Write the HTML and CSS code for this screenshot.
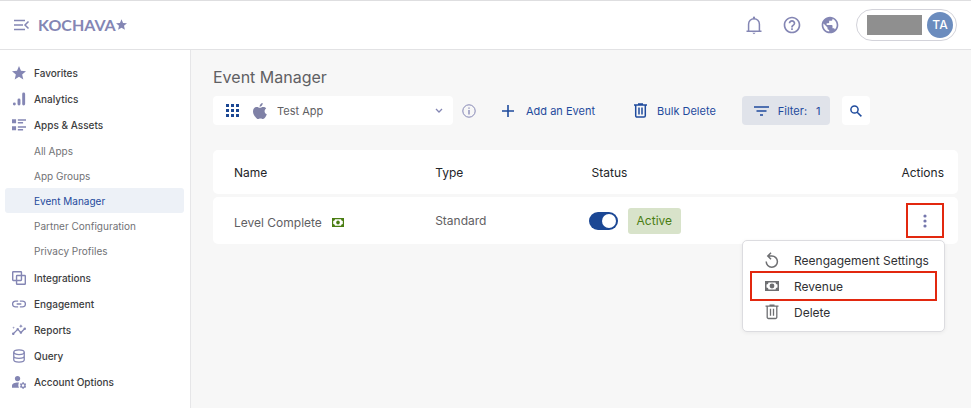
FILE: index.html
```html
<!DOCTYPE html>
<html lang="en">
<head>
  <meta charset="UTF-8" />
  <meta name="viewport" content="width=device-width, initial-scale=1.0"/>
  <title>Event Manager</title>
  <link rel="stylesheet" href="styles.css">
</head>
<body>
  <header class="topbar">
    <button class="icon-btn collapse" aria-label="Collapse menu">
      <svg width="16" height="12" viewBox="0 0 16 12" fill="none" stroke="currentColor" stroke-width="1.5"><path d="M0 1.500h11M0 6h9M0 10.500h11M14.500 2.500L11 6l3.500 3.500"/></svg>
    </button>
    <a class="logo" href="#">KOCHAVA<svg width="11" height="11" viewBox="2 2 20 19" fill="currentColor"><path d="M12 17.270L18.180 21l-1.640-7.030L22 9.240l-7.190-.61L12 2 9.190 8.630 2 9.240l5.460 4.730L5.820 21z"/></svg></a>
    <div class="top-actions">
      <button class="icon-btn" aria-label="Notifications">
        <svg width="20" height="20" viewBox="0 0 24 24" fill="none" stroke="currentColor" stroke-width="1.800"><path d="M3 19.500h18M5.500 19.500V11a6.500 6.500 0 0 1 13 0v8.500"/><path d="M12 2v3" stroke-width="2.500"/><path d="M10 21.200h4l-2 2z" fill="currentColor" stroke="none"/></svg>
      </button>
      <button class="icon-btn" aria-label="Help">
        <svg width="20" height="20" viewBox="0 0 24 24" fill="currentColor"><path d="M11 18h2v-2h-2v2zm1-16C6.480 2 2 6.480 2 12s4.480 10 10 10 10-4.480 10-10S17.520 2 12 2zm0 18c-4.410 0-8-3.590-8-8s3.590-8 8-8 8 3.590 8 8-3.590 8-8 8zm0-14c-2.210 0-4 1.790-4 4h2c0-1.100.9-2 2-2s2 .9 2 2c0 2-3 1.750-3 5h2c0-2.250 3-2.500 3-5 0-2.210-1.790-4-4-4z"/></svg>
      </button>
      <button class="icon-btn" aria-label="Language">
        <svg width="20" height="20" viewBox="0 0 24 24" fill="currentColor"><path d="M12 2C6.480 2 2 6.480 2 12s4.480 10 10 10 10-4.480 10-10S17.520 2 12 2zm-1 17.930c-3.950-.49-7-3.850-7-7.930 0-.62.080-1.210.21-1.790L9 15v1c0 1.100.9 2 2 2v1.930zm6.900-2.540c-.26-.81-1-1.390-1.900-1.390h-1v-3c0-.55-.45-1-1-1H8v-2h2c.55 0 1-.45 1-1V7h2c1.100 0 2-.9 2-2v-.41c2.930 1.190 5 4.060 5 7.410 0 2.080-.8 3.970-2.100 5.390z"/></svg>
      </button>
      <button class="account" aria-label="Account">
        <span class="account-name"></span>
        <span class="avatar">TA</span>
      </button>
    </div>
  </header>

  <div class="layout">
    <nav class="sidebar">
      <a class="nav-item" href="#"><svg viewBox="0 0 24 24" fill="currentColor"><path d="M12 18.300L19.400 23l-2-8.400L24 9l-8.600-.7L12 0 8.600 8.300 0 9l6.600 5.600L4.600 23z"/></svg>Favorites</a>
      <a class="nav-item" href="#"><svg viewBox="0 0 24 24" fill="currentColor"><circle cx="4" cy="20.500" r="2.500"/><rect x="9.500" y="11" width="5" height="12" rx="2.500"/><rect x="17.500" y="1" width="5" height="22" rx="2.500"/></svg>Analytics</a>
      <a class="nav-item" href="#"><svg viewBox="0 0 24 24" fill="currentColor"><path d="M0 2h7v7H0zM0 14h7v7H0zM10 2h14v2.500H10zM10 7h9v2.500h-9zM10 14h14v2.500H10zM10 19h9v2.500h-9z"/></svg>Apps &amp; Assets</a>
      <a class="nav-sub" href="#">All Apps</a>
      <a class="nav-sub" href="#">App Groups</a>
      <a class="nav-sub active" href="#">Event Manager</a>
      <a class="nav-sub" href="#">Partner Configuration</a>
      <a class="nav-sub" href="#">Privacy Profiles</a>
      <a class="nav-item" href="#"><svg viewBox="0 0 24 24" fill="none" stroke="currentColor" stroke-width="2.400"><rect x="1.200" y="1.200" width="15" height="15" rx="1"/><rect x="7.800" y="7.800" width="15" height="15" rx="1"/></svg>Integrations</a>
      <a class="nav-item" href="#"><svg viewBox="0 0 24 24" fill="none" stroke="currentColor" stroke-width="2.200"><path d="M10.500 7H6a5 5 0 0 0 0 10h4.500M13.500 7H18a5 5 0 0 1 0 10h-4.500M8 12h8"/></svg>Engagement</a>
      <a class="nav-item" href="#"><svg viewBox="1 1 22 22" fill="currentColor"><path d="M21 8c-1.450 0-2.260 1.440-1.930 2.510l-3.550 3.560c-.3-.09-.74-.09-1.040 0l-2.550-2.550C12.270 10.450 11.460 9 10 9c-1.450 0-2.270 1.440-1.930 2.520l-4.560 4.550C2.440 15.740 1 16.550 1 18c0 1.100.9 2 2 2 1.450 0 2.260-1.440 1.930-2.510l4.550-4.560c.3.090.74.090 1.040 0l2.550 2.550C12.730 16.550 13.540 18 15 18c1.450 0 2.270-1.440 1.930-2.520l3.560-3.550C21.560 12.260 23 11.450 23 10c0-1.100-.9-2-2-2zM15 9l.94-2.070L18 6l-2.060-.93L15 3l-.92 2.070L12 6l2.080.93zM3.500 11L4 9l2-.5L4 8l-.5-2L3 8l-2 .5L3 9z"/></svg>Reports</a>
      <a class="nav-item" href="#"><svg viewBox="0 0 24 24" fill="none" stroke="currentColor" stroke-width="2.200"><ellipse cx="12" cy="5.500" rx="9" ry="4"/><path d="M3 5.500v13c0 2.200 4 4 9 4s9-1.800 9-4v-13M3 12c0 2.200 4 4 9 4s9-1.800 9-4"/></svg>Query</a>
      <a class="nav-item" href="#"><svg viewBox="0 0 24 24" fill="currentColor"><circle cx="9.500" cy="6" r="4.500"/><path d="M12 13c-6-.5-12 1.500-12 5.500V22h12c-1.500-3-1.500-6 0-9z"/><circle cx="19" cy="18" r="3.300" fill="none" stroke="currentColor" stroke-width="2.200"/><path d="M18 12h2v3h-2zM18 21h2v3h-2zM13.300 15.900l1-1.700 2.600 1.500-1 1.700zM21.100 20.300l1-1.700 2.600 1.500-1 1.700zM13.300 20.100l2.600-1.500 1 1.700-2.600 1.500zM21.100 15.700l2.600-1.500 1 1.700-2.600 1.500z"/></svg>Account Options</a>
    </nav>

    <main class="content">
      <h1>Event Manager</h1>

      <div class="toolbar">
        <div class="app-picker">
          <svg class="grid-icon" width="13" height="13" viewBox="0 0 13 13" fill="currentColor"><path d="M0 0h3v3H0zM5 0h3v3H5zM10 0h3v3h-3zM0 5h3v3H0zM5 5h3v3H5zM10 5h3v3h-3zM0 10h3v3H0zM5 10h3v3H5zM10 10h3v3h-3z"/></svg>
          <svg class="apple-icon" width="14" height="16" viewBox="0 0 14 16" fill="currentColor"><path d="M9.700 0c.1 1.200-.4 2.100-1 2.800-.6.700-1.300 1-2.100 1-.1-1 .3-1.900.9-2.600C8.100.5 8.900.1 9.700 0zM13.200 5.400c-1 .6-1.600 1.500-1.600 2.800 0 1.500.9 2.600 2.200 3.100-.4 1.200-1 2.300-1.700 3.200-.6.800-1.200 1.400-2.100 1.400-.9 0-1.300-.5-2.500-.5s-1.600.5-2.500.5c-.9 0-1.600-.7-2.200-1.500C1.300 12.700 0 10.800 0 8.400 0 5.600 1.800 4 3.800 4c1.200 0 2.200.8 3.100.8.800 0 1.900-.8 3.300-.8 1.200 0 2.300.5 3 1.400z"/></svg>
          <select aria-label="App">
            <option>Test App</option>
          </select>
          <svg class="chevron" width="8" height="6" viewBox="0 0 8 6" fill="none" stroke="currentColor" stroke-width="1.300"><path d="M1 1l3 3 3-3"/></svg>
        </div>
        <button class="icon-btn info" aria-label="App information">
          <svg width="14" height="14" viewBox="0 0 14 14" fill="none" stroke="currentColor"><circle cx="7" cy="7" r="6.200"/><path d="M7 6v4.500M7 3.500v1.300" stroke-width="1.300"/></svg>
        </button>
        <button class="tool-btn add">
          <svg width="12" height="12" viewBox="0 0 12 12" stroke="currentColor" stroke-width="1.600"><path d="M6 0v12M0 6h12"/></svg>
          Add an Event
        </button>
        <button class="tool-btn bulk">
          <svg width="13" height="15" viewBox="0 0 13 15" fill="none" stroke="currentColor" stroke-width="1.500"><path d="M0 2h13M4 1h5M1.700 2v10.800a1.300 1.300 0 0 0 1.300 1.300h7a1.300 1.300 0 0 0 1.300-1.300V2M5 4.500v7M8 4.500v7"/></svg>
          Bulk Delete
        </button>
        <button class="tool-btn filter">
          <svg width="15" height="10" viewBox="0 0 15 10" stroke="currentColor" stroke-width="1.600"><path d="M0 1h15M2.500 5h10M6 9h3"/></svg>
          Filter: <span>1</span>
        </button>
        <button class="tool-btn search" aria-label="Search">
          <svg width="12" height="12" viewBox="0 0 12 12" fill="none" stroke="currentColor" stroke-width="1.500"><circle cx="4.500" cy="4.500" r="3.600"/><path d="M7.200 7.200l4.200 4.200"/></svg>
        </button>
      </div>

      <table class="events">
        <thead>
          <tr>
            <th class="col-name">Name</th>
            <th class="col-type">Type</th>
            <th class="col-status">Status</th>
            <th class="col-actions">Actions</th>
          </tr>
        </thead>
        <tbody>
          <tr>
            <td>
              <div class="event-name">
                Level Complete
                <svg width="12" height="9" viewBox="0 0 12 9"><path fill="currentColor" fill-rule="evenodd" d="M0 0h12v9H0zM3 1.300A1.800 1.800 0 0 1 1.200 3v3A1.800 1.800 0 0 1 3 7.700h6A1.800 1.800 0 0 1 10.800 6V3A1.800 1.800 0 0 1 9 1.300z"/><ellipse cx="6" cy="4.500" rx="1.800" ry="2" fill="currentColor"/></svg>
              </div>
            </td>
            <td>Standard</td>
            <td>
              <div class="status">
                <input type="checkbox" class="toggle" aria-label="Active" checked>
                <span class="badge">Active</span>
              </div>
            </td>
            <td>
              <div class="actions">
                <button class="more" aria-label="Row actions">
                  <svg width="4" height="14" viewBox="0 0 4 14" fill="currentColor"><circle cx="2" cy="2" r="1.600"/><circle cx="2" cy="7" r="1.600"/><circle cx="2" cy="12" r="1.600"/></svg>
                </button>
                <div class="menu">
                  <button class="menu-item">
                    <svg viewBox="0 0 14 16" fill="none" stroke="currentColor" stroke-width="1.500"><path d="M1.200 9.500A5.600 5.600 0 1 0 6.800 4H3.500M6 .8L2.800 4 6 7.200"/></svg>
                    Reengagement Settings
                  </button>
                  <button class="menu-item highlighted">
                    <svg viewBox="0 0 14 16"><path fill="currentColor" fill-rule="evenodd" d="M0 3h14v10H0zM3.500 4.400A2 2 0 0 1 1.500 6.400v3.200a2 2 0 0 1 2 2h7a2 2 0 0 1 2-2V6.400a2 2 0 0 1-2-2z"/><circle cx="7" cy="8" r="2.400" fill="currentColor"/></svg>
                    Revenue
                  </button>
                  <button class="menu-item">
                    <svg viewBox="0 0 14 16" fill="none" stroke="currentColor" stroke-width="1.300"><path d="M.5 2.200h13M4.500 1.200h5M2.200 2.200v11a1.300 1.300 0 0 0 1.300 1.300h7a1.300 1.300 0 0 0 1.300-1.300v-11M5.500 4.700v7M8.500 4.700v7"/></svg>
                    Delete
                  </button>
                </div>
              </div>
            </td>
          </tr>
        </tbody>
      </table>
    </main>
  </div>
</body>
</html>
```
FILE: styles.css
```css
* {
  box-sizing: border-box;
}
body {
  margin: 0;
  min-height: 100vh;
  display: flex;
  flex-direction: column;
  font-family: Inter, "Liberation Sans", sans-serif;
  font-size: 12px;
  color: #5f6063;
  background-color: #f7f7f7;
}
button,
select {
  font: inherit;
  border: none;
  background: none;
  cursor: pointer;
}
svg {
  flex-shrink: 0;
}

/* top bar */
.topbar {
  display: flex;
  align-items: center;
  height: 50px;
  padding: 0 14px 1px;
  background-color: white;
  border-top: 1px solid #dedee0;
  border-bottom: 1px solid #e2e2e4;
}
.icon-btn {
  display: flex;
  padding: 0;
  color: #8486b4;
}
.logo {
  display: flex;
  align-items: center;
  margin-left: 8px;
  font-family: Lato, sans-serif;
  font-size: 16px;
  font-weight: 700;
  color: #8486b4;
  text-decoration: none;
}
.top-actions {
  display: flex;
  align-items: center;
  gap: 18px;
  margin-left: auto;
}
.account {
  display: flex;
  align-items: center;
  gap: 5px;
  height: 32px;
  margin-left: -2px;
  padding: 0 3px 0 10px;
  border: 1px solid #d3d3da;
  border-radius: 16px;
  background-color: white;
}
.account-name {
  width: 55px;
  height: 20px;
  background-color: #8f8f8f;
}
.avatar {
  width: 26px;
  height: 26px;
  border-radius: 50%;
  background-color: #6b8cbe;
  color: white;
  font-size: 12px;
  font-weight: 500;
  line-height: 26px;
  text-align: center;
}

/* sidebar */
.layout {
  display: flex;
  flex: 1;
}
.sidebar {
  width: 191px;
  flex-shrink: 0;
  padding: 10px 6px 0 5px;
  background-color: white;
  border-right: 1px solid #e6e6e8;
}
.sidebar a {
  display: flex;
  align-items: center;
  font-size: 10px;
  text-decoration: none;
}
.nav-item {
  gap: 8px;
  height: 26px;
  padding-left: 7px;
  font-weight: 500;
  color: #3c3d40;
}
.nav-item svg {
  width: 14px;
  height: 14px;
  color: #8486b4;
}
.nav-sub {
  height: 25px;
  padding-left: 29px;
  border-radius: 3px;
  color: #717275;
}
.nav-sub.active {
  background-color: #edf1f7;
  color: #1f4b9d;
}
.nav-sub + .nav-item {
  margin-top: 2px;
}

/* content */
.content {
  flex: 1;
  padding: 17px 13px 0 22px;
}
h1 {
  margin: 0;
  font-size: 16px;
  font-weight: 400;
  line-height: 20px;
}
.toolbar {
  display: flex;
  align-items: center;
  margin-top: 9px;
}
.app-picker {
  display: flex;
  align-items: center;
  width: 240px;
  height: 29px;
  padding: 0 10px 0 13px;
  border-radius: 4px;
  background-color: white;
}
.grid-icon {
  color: #1b4794;
}
.apple-icon {
  margin-left: 14px;
  color: #7f81a6;
}
.app-picker select {
  flex: 1;
  padding: 0 0 0 10px;
  font-size: 11px;
  color: #5f6063;
  appearance: none;
}
.chevron {
  color: #8486b4;
}
.info {
  margin-left: 9px;
}
.tool-btn {
  display: flex;
  align-items: center;
  height: 29px;
  padding: 0;
  border-radius: 4px;
  font-size: 11px;
  color: #1f4b9d;
}
.add {
  gap: 12px;
  margin-left: 26px;
}
.bulk {
  gap: 10px;
  margin-left: 39px;
}
.filter {
  gap: 9px;
  margin-left: 26px;
  padding: 0 9px 0 12px;
  background-color: #e0e3ea;
}
.search {
  width: 28px;
  justify-content: center;
  margin-left: 12px;
  background-color: white;
}

/* table */
.events {
  width: 100%;
  margin-top: 22px;
  border-spacing: 0 3px;
  table-layout: fixed;
}
.events th,
.events td {
  padding: 0 0 0 21px;
  background-color: white;
  text-align: left;
}
.events th {
  height: 44px;
  font-weight: 400;
  color: #242528;
}
.events td {
  height: 47px;
}
.events tr > :first-child {
  border-radius: 5px 0 0 5px;
}
.events tr > :last-child {
  border-radius: 0 5px 5px 0;
  padding-right: 14px;
  text-align: right;
}
.events td:nth-child(3) {
  padding-left: 18px;
}
.col-name {
  width: 27%;
}
.col-type {
  width: 21%;
}
.col-status {
  width: 21%;
}
.event-name {
  display: flex;
  align-items: center;
  gap: 10px;
  padding-top: 3px;
}
.event-name svg {
  color: #4a7d12;
}
.status {
  display: flex;
  align-items: center;
  gap: 10px;
}
.toggle {
  appearance: none;
  display: flex;
  justify-content: flex-end;
  width: 29px;
  height: 18px;
  margin: 0;
  padding: 2px;
  border-radius: 9px;
  background-color: #1b4794;
  cursor: pointer;
}
.toggle::before {
  content: "";
  width: 14px;
  height: 14px;
  border-radius: 50%;
  background-color: white;
}
.toggle:not(:checked) {
  justify-content: flex-start;
  background-color: #b5b5bb;
}
.badge {
  padding: 0 9px;
  border-radius: 3px;
  background-color: #d8e3ca;
  color: #4a7d12;
  line-height: 26px;
}

/* row actions */
.actions {
  position: relative;
  display: flex;
  justify-content: flex-end;
}
.more {
  display: flex;
  align-items: center;
  justify-content: center;
  width: 38px;
  height: 35px;
  padding: 0;
  border: 2px solid #e2280f;
  color: #7476ac;
}
.menu {
  position: absolute;
  top: 100%;
  right: -1px;
  margin-top: 2px;
  width: 203px;
  padding: 6px 9px;
  border: 1px solid #dcdce0;
  border-radius: 5px;
  background-color: white;
  box-shadow: 0 1px 4px rgba(0,0,0,0.06);
}
.menu-item {
  display: flex;
  align-items: center;
  gap: 15px;
  width: 100%;
  height: 26px;
  padding: 0 0 0 13px;
  color: #303134;
  white-space: nowrap;
}
.menu-item svg {
  width: 14px;
  height: 16px;
  color: #6e6f72;
}
.menu-item.highlighted {
  outline: 2px solid #e2280f;
}
```
